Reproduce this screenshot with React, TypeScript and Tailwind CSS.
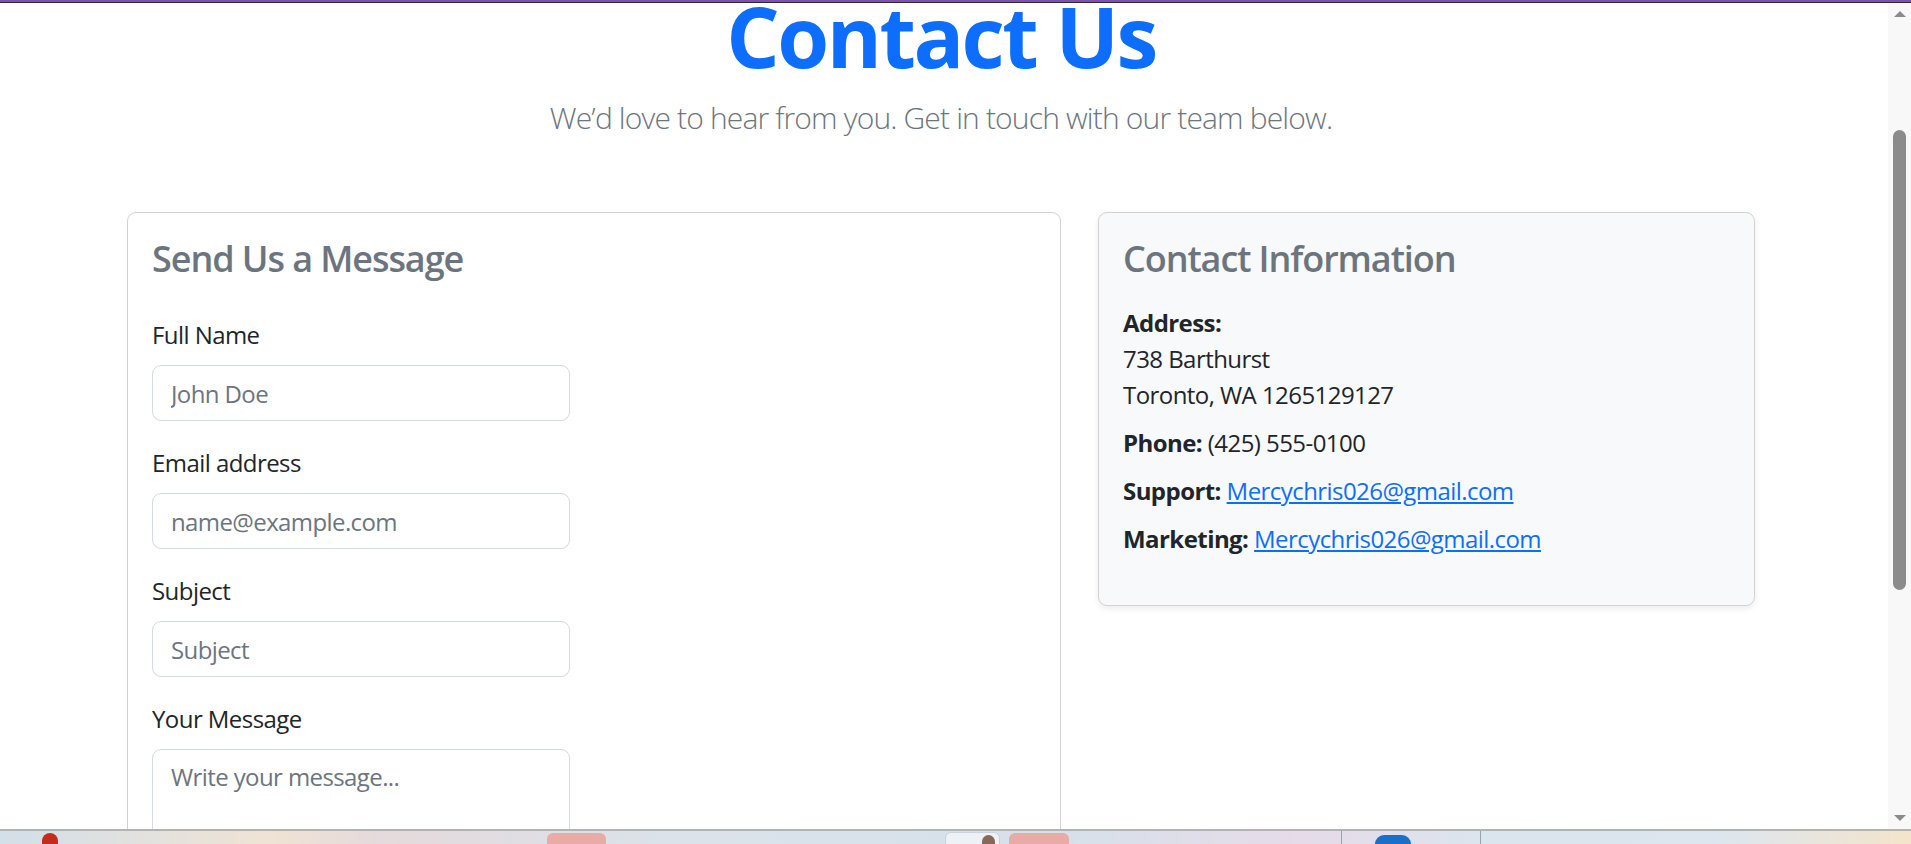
import React from 'react';

const font = "font-['Open_Sans',sans-serif]";

function Field({label, placeholder, type = 'text'}: {label: string; placeholder: string; type?: string}) {
  return (
    <div className="mb-[24px]">
      <label className="mb-[12px] block text-[24px] leading-[36px]">{label}</label>
      <input
        type={type}
        placeholder={placeholder}
        className="block h-[56px] w-[418px] rounded-[9px] border border-[#d5dae0] bg-white px-[18px] text-[24px] leading-[36px] tracking-[-0.025em] text-[#212529] outline-none placeholder:text-[#6c757d]"
      />
    </div>
  );
}

function Scrollbar() {
  return (
    <div className="flex w-[23px] shrink-0 flex-col items-center bg-[#f8f8f8]">
      <div className="mt-[8px] h-0 w-0 border-x-[6px] border-b-[6px] border-x-transparent border-b-[#8b8b8b]" />
      <div className="mt-[113px] h-[460px] w-[13px] rounded-full bg-[#8b8b8b]" />
      <div className="mt-auto mb-[8px] h-0 w-0 border-x-[6px] border-t-[6px] border-x-transparent border-t-[#8b8b8b]" />
    </div>
  );
}

function Taskbar() {
  return (
    <div className="flex h-[15px] shrink-0 items-end border-t-2 border-[#b3b3b3] bg-[linear-gradient(90deg,#d3dfe9_0%,#efe3d4_14%,#e5dadc_20%,#dbe2ea_35%,#d6e1ea_55%,#e6dbe8_68%,#dbe5ee_78%,#dde6ee_90%,#f4e4cb_100%)]">
      <div className="ml-[42px] h-[11px] w-[16px] rounded-t-full bg-[#c42b1c]" />
      <div className="ml-[489px] h-[11px] w-[59px] rounded-t-[6px] bg-[#e8aba6]" />
      <div className="ml-[339px] flex h-[12px] w-[55px] items-end justify-end rounded-t-[6px] border border-b-0 border-[#c9d2de] bg-[#eef1f6] pr-[4px]">
        <div className="h-[9px] w-[13px] rounded-t-full bg-[#86695d]" />
      </div>
      <div className="ml-[9px] h-[11px] w-[60px] rounded-t-[6px] bg-[#e8aba6]" />
      <div className="ml-[272px] h-[13px] w-px bg-[#9aa3ad]" />
      <div className="ml-[33px] h-[9px] w-[36px] rounded-t-full bg-[#1a6fc9]" />
      <div className="ml-[69px] h-[13px] w-px bg-[#9aa3ad]" />
    </div>
  );
}

export default function App() {
  return (
    <div className={`flex h-[844px] w-[1911px] flex-col overflow-hidden bg-white ${font}`}>
      <div className="h-[2px] shrink-0 bg-[#7b52b0]" />
      <div className="h-px shrink-0 bg-[#2b2b2b]" />
      <div className="flex min-h-0 flex-1">
        <main className="min-w-0 flex-1 overflow-hidden text-[#212529]">
          <div className="ml-[127px] w-[1628px]">
            <header className="text-center">
              <h1 className="text-[84px] font-bold leading-[65px] tracking-[-0.03em] text-[#0d6efd]">Contact Us</h1>
              <p className="mt-[32px] text-[30px] font-light leading-[36px] tracking-[-0.028em] text-[#6c757d]">
                We’d love to hear from you. Get in touch with our team below.
              </p>
            </header>

            <div className="mt-[76px] flex items-start gap-[37px] tracking-[-0.035em]">
              <section className="w-[934px] shrink-0 rounded-[9px] border border-[#d2d2d2] bg-white p-[24px]">
                <h4 className="mb-[37px] text-[36px] font-semibold leading-[43px] tracking-[-0.03em] text-[#6c757d]">Send Us a Message</h4>
                <form>
                  <Field label="Full Name" placeholder="John Doe" />
                  <Field label="Email address" placeholder="name@example.com" type="email" />
                  <Field label="Subject" placeholder="Subject" />
                  <div className="mb-[24px]">
                    <label className="mb-[12px] block text-[24px] leading-[36px]">Your Message</label>
                    <textarea
                      rows={5}
                      placeholder="Write your message..."
                      className="block h-[201px] w-[418px] resize-none rounded-[9px] border border-[#d5dae0] bg-white px-[18px] py-[9px] text-[24px] leading-[36px] tracking-[-0.025em] outline-none placeholder:text-[#6c757d]"
                    />
                  </div>
                </form>
              </section>

              <aside className="w-[657px] shrink-0 rounded-[9px] border border-[#d2d2d2] bg-[#f8f9fa] p-[24px] shadow-[0_3px_6px_rgba(0,0,0,0.075)]">
                <h4 className="mb-[25px] text-[36px] font-semibold leading-[43px] tracking-[-0.03em] text-[#6c757d]">Contact Information</h4>
                <p className="mb-[12px] text-[24px] leading-[36px]">
                  <strong className="font-bold">Address:</strong>
                  <br />
                  738 Barthurst
                  <br />
                  Toronto, WA 1265129127
                </p>
                <p className="mb-[12px] text-[24px] leading-[36px]">
                  <strong className="font-bold">Phone:</strong> (425) 555-0100
                </p>
                <p className="mb-[12px] text-[24px] leading-[36px]">
                  <strong className="font-bold">Support:</strong>{' '}
                  <a href="#" className="text-[#0d6efd] underline">Mercychris026@gmail.com</a>
                </p>
                <p className="mb-[24px] text-[24px] leading-[36px]">
                  <strong className="font-bold">Marketing:</strong>{' '}
                  <a href="#" className="text-[#0d6efd] underline">Mercychris026@gmail.com</a>
                </p>
              </aside>
            </div>
          </div>
        </main>
        <Scrollbar />
      </div>
      <Taskbar />
    </div>
  );
}
